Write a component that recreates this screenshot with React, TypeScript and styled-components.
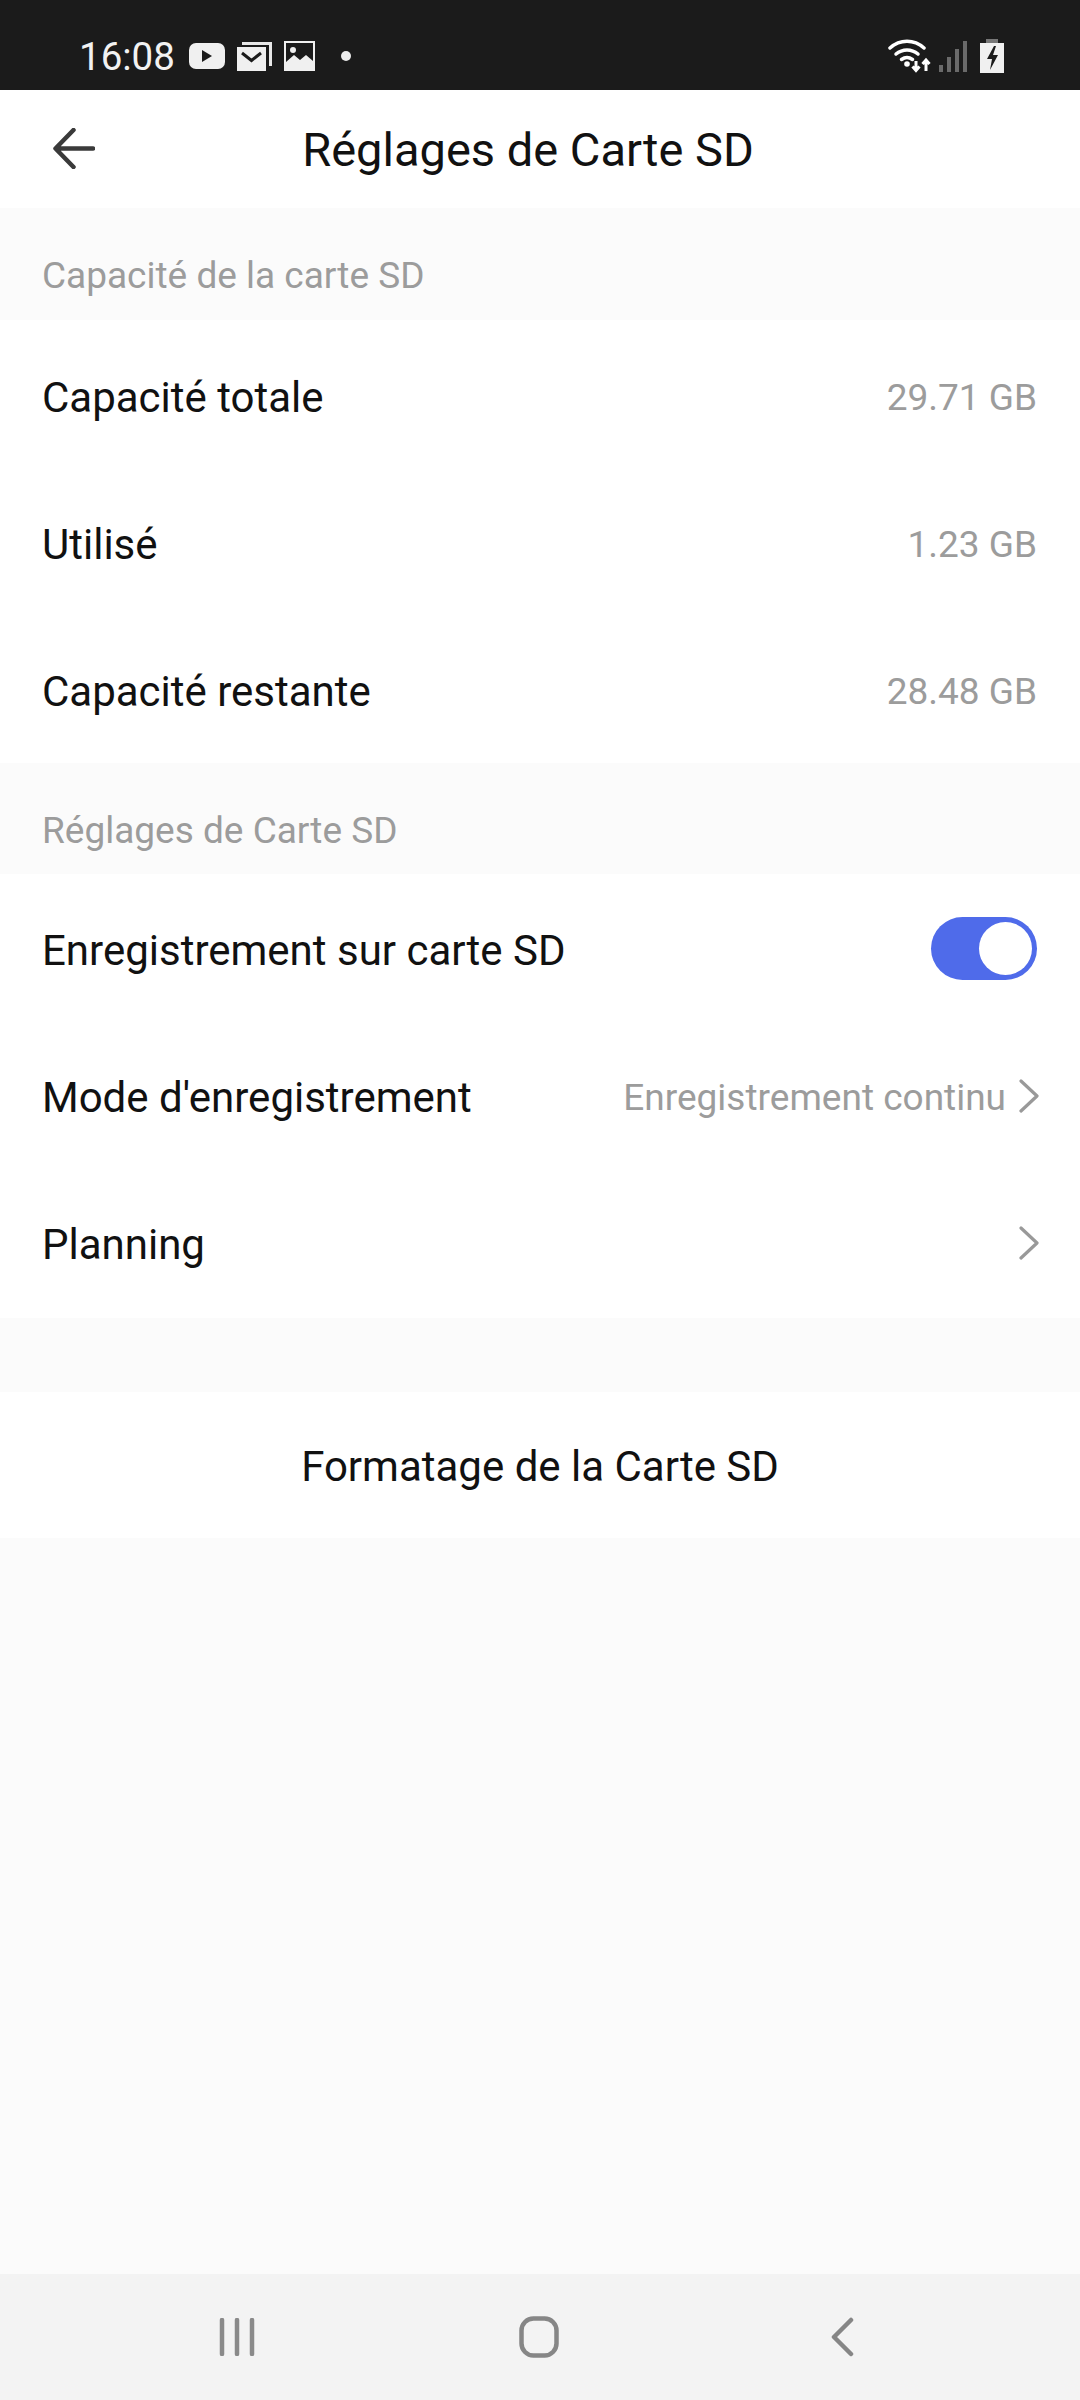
import React from "react";
import styled, { createGlobalStyle } from "styled-components";

const GlobalStyle = createGlobalStyle`
  html, body {
    margin: 0;
    padding: 0;
    background: #fbfbfb;
    font-family: Roboto, "Liberation Sans", sans-serif;
  }
`;

const App = () => (
  <Page>
    <GlobalStyle />
    <StatusBar>
      <StatusLeft>
        <Clock>16:08</Clock>
        <svg width="36" height="26" viewBox="0 0 36 26">
          <rect x="0" y="0" width="36" height="26" rx="7" fill="#f0f0f0" />
          <path d="M13 7l10 6-10 6z" fill="#1b1b1b" />
        </svg>
        <svg width="35" height="30" viewBox="0 0 35 30">
          <path d="M5 4V1h30v24h-3V4z" fill="#e8e8e8" />
          <rect x="0" y="6" width="29" height="24" fill="#f0f0f0" />
          <path d="M5 12l9.500 7.500L24 12" fill="none" stroke="#1b1b1b" strokeWidth="3" />
        </svg>
        <svg width="31" height="30" viewBox="0 0 31 30">
          <rect x="1" y="1" width="29" height="28" fill="none" stroke="#f0f0f0" strokeWidth="2" />
          <circle cx="9" cy="9" r="3" fill="#f0f0f0" />
          <path d="M2 21l8-7 6 5 6-5 7 6v8H2z" fill="#f0f0f0" />
        </svg>
        <Dot />
      </StatusLeft>
      <StatusRight>
        <svg width="44" height="34" viewBox="0 0 44 34">
          <g fill="none" stroke="#fff" strokeWidth="3.500" strokeLinecap="round">
            <path d="M2 9c10-9 24-9 34 0" />
            <path d="M8 15c6.500-5.500 15.500-5.500 22 0" />
            <path d="M13.500 20.500c3.500-2.500 7.500-2.500 11 0" />
          </g>
          <circle cx="19" cy="25" r="2.800" fill="#fff" />
          <path d="M28 22v9M24.500 27.500l3.500 4 3.500-4" fill="none" stroke="#fff" strokeWidth="3" />
          <path d="M38 32V21M34.500 25l3.500-4 3.500 4" fill="none" stroke="#fff" strokeWidth="3" />
        </svg>
        <svg width="28" height="31" viewBox="0 0 28 31">
          <g fill="#6a6a6a">
            <rect x="0" y="24" width="4" height="7" />
            <rect x="8" y="16" width="4" height="15" />
            <rect x="16" y="8" width="4" height="23" />
            <rect x="24" y="0" width="4" height="31" />
          </g>
        </svg>
        <BatteryIcon width="24" height="34" viewBox="0 0 24 34">
          <rect x="6" y="0" width="12" height="5" fill="#777" />
          <rect x="0" y="4" width="24" height="30" fill="#f0f0f0" />
          <path d="M14 7l-7 13h5l-2 11 8-15h-5l3-9z" fill="#1b1b1b" />
        </BatteryIcon>
      </StatusRight>
    </StatusBar>

    <Header>
      <BackButton>
        <svg width="42" height="41" viewBox="0 0 42 41">
          <path
            d="M40 20.500H3M20.500 2L2.500 20.500 20.500 39"
            fill="none"
            stroke="#3a3a3a"
            strokeWidth="4.500"
            strokeLinecap="round"
            strokeLinejoin="round"
          />
        </svg>
      </BackButton>
      <Title>Réglages de Carte SD</Title>
    </Header>

    <SectionLabel $height={112}>Capacité de la carte SD</SectionLabel>
    <Group $top={2}>
      <Row>
        <RowLabel>Capacité totale</RowLabel>
        <RowValue>29.71 GB</RowValue>
      </Row>
      <Row>
        <RowLabel>Utilisé</RowLabel>
        <RowValue>1.23 GB</RowValue>
      </Row>
      <Row>
        <RowLabel>Capacité restante</RowLabel>
        <RowValue>28.48 GB</RowValue>
      </Row>
    </Group>

    <SectionLabel $height={111}>Réglages de Carte SD</SectionLabel>
    <Group $top={1} $bottom={2}>
      <Row>
        <RowLabel>Enregistrement sur carte SD</RowLabel>
        <Toggle>
          <Knob />
        </Toggle>
      </Row>
      <Row>
        <RowLabel>Mode d'enregistrement</RowLabel>
        <RowValue>Enregistrement continu</RowValue>
        <Chevron />
      </Row>
      <Row>
        <RowLabel>Planning</RowLabel>
        <Chevron />
      </Row>
    </Group>

    <FormatButton>Formatage de la Carte SD</FormatButton>

    <Spacer />

    <NavBar>
      <svg width="36" height="38" viewBox="0 0 36 38">
        <path d="M3 2v34M18 2v34M33 2v34" stroke="#8a8a8a" strokeWidth="4.500" strokeLinecap="round" />
      </svg>
      <HomeIcon width="40" height="42" viewBox="0 0 40 42">
        <rect x="2.500" y="2.500" width="35" height="37" rx="12" fill="none" stroke="#868686" strokeWidth="4.500" />
      </HomeIcon>
      <svg width="24" height="40" viewBox="0 0 24 40">
        <path d="M21 3L4 20l17 17" fill="none" stroke="#868686" strokeWidth="4.500" strokeLinecap="round" strokeLinejoin="round" />
      </svg>
    </NavBar>
  </Page>
);

const Chevron = () => (
  <ChevronIcon width="20" height="34" viewBox="0 0 20 34">
    <path d="M2 2l16 15L2 32" fill="none" stroke="#999" strokeWidth="3.200" strokeLinecap="round" strokeLinejoin="round" />
  </ChevronIcon>
);

const Page = styled.div`
  width: 1080px;
  height: 2400px;
  display: flex;
  flex-direction: column;
  background: #fbfbfb;
  overflow: hidden;
`;

const StatusBar = styled.div`
  height: 90px;
  flex: none;
  background: #1b1b1b;
  display: flex;
  align-items: center;
  justify-content: space-between;
  padding: 22px 76px 0 79px;
  box-sizing: border-box;
`;

const StatusLeft = styled.div`
  display: flex;
  align-items: center;
  gap: 12px;
`;

const Clock = styled.span`
  color: #f2f2f2;
  font-size: 38.500px;
  margin-right: 2px;
`;

const Dot = styled.span`
  width: 10px;
  height: 10px;
  border-radius: 50%;
  background: #ececec;
  margin-left: 14px;
`;

const StatusRight = styled.div`
  display: flex;
  align-items: center;
  gap: 7px;
`;

const BatteryIcon = styled.svg`
  margin-left: 6px;
`;

const Header = styled.div`
  height: 118px;
  flex: none;
  background: #fff;
  display: flex;
  align-items: center;
  justify-content: center;
  padding-right: 24px;
  position: relative;
`;

const BackButton = styled.div`
  position: absolute;
  left: 53px;
  top: 38px;
  line-height: 0;
`;

const Title = styled.h1`
  margin: 0;
  font-size: 47px;
  font-weight: 400;
  color: #111;
`;

const SectionLabel = styled.div<{ $height: number }>`
  height: ${(p) => p.$height}px;
  flex: none;
  box-sizing: border-box;
  padding: 45px 42px 0;
  font-size: 37px;
  line-height: 46px;
  color: #9c9c9c;
`;

const Group = styled.div<{ $top: number; $bottom?: number }>`
  background: #fff;
  padding: ${(p) => p.$top}px 0 ${(p) => p.$bottom ?? 0}px;
`;

const Row = styled.div`
  height: 147px;
  display: flex;
  align-items: center;
  padding: 0 43px 0 42px;
`;

const RowLabel = styled.span`
  flex: 1;
  padding-top: 4px;
  font-size: 42px;
  color: #111;
`;

const RowValue = styled.span`
  padding-top: 4px;
  font-size: 37px;
  color: #9c9c9c;
`;

const ChevronIcon = styled.svg`
  margin-left: 13px;
  margin-right: -2px;
`;

const Toggle = styled.div`
  width: 106px;
  height: 63px;
  border-radius: 32px;
  background: #4f6bea;
  display: flex;
  align-items: center;
  justify-content: flex-end;
  padding-right: 5px;
  box-sizing: border-box;
`;

const Knob = styled.span`
  width: 53px;
  height: 53px;
  border-radius: 50%;
  background: #fff;
`;

const FormatButton = styled.div`
  height: 146px;
  margin-top: 74px;
  padding-top: 3px;
  box-sizing: border-box;
  flex: none;
  background: #fff;
  display: flex;
  align-items: center;
  justify-content: center;
  font-size: 42px;
  color: #111;
`;

const Spacer = styled.div`
  flex: 1;
`;

const NavBar = styled.div`
  height: 126px;
  flex: none;
  background: #f3f3f3;
  box-sizing: border-box;
  padding: 0 226px 0 219px;
  display: flex;
  align-items: center;
  justify-content: space-between;
`;

const HomeIcon = styled.svg`
  margin-right: 8px;
`;

export default App;
